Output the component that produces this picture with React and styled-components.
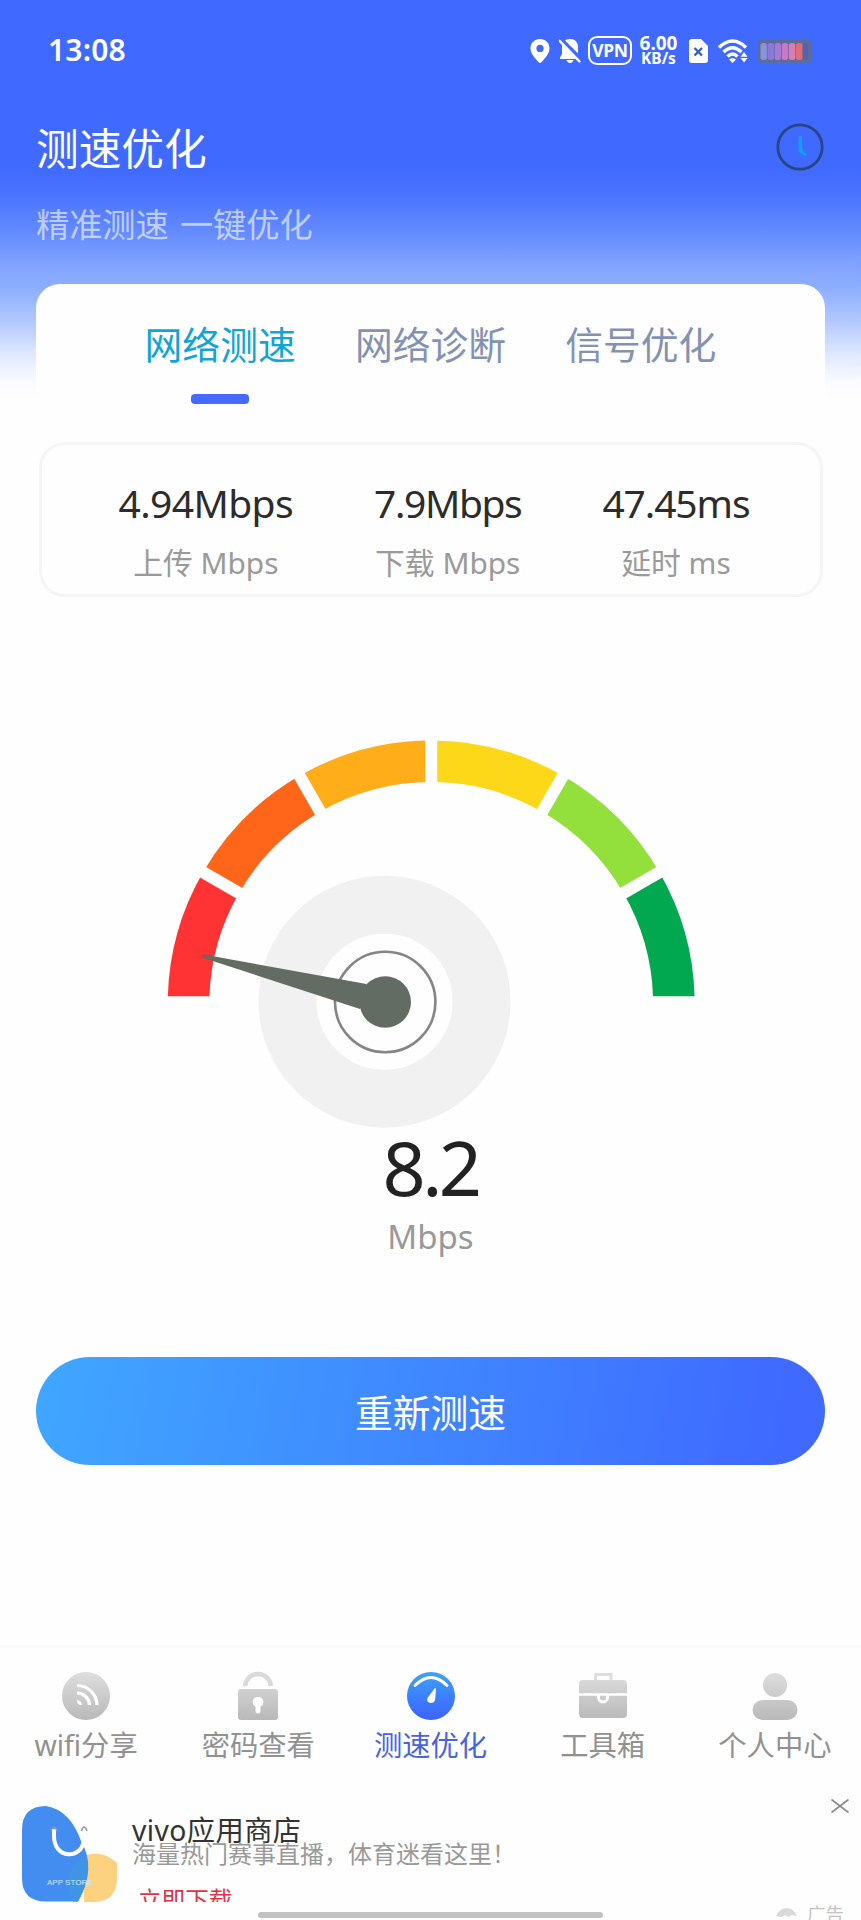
import React from 'react'
import styled, { createGlobalStyle } from 'styled-components'

const GlobalStyle = createGlobalStyle`
  * {
    box-sizing: border-box;
  }
  body {
    margin: 0;
    background: #fefefe;
    font-family: 'Noto Sans', 'Noto Sans CJK SC', sans-serif;
  }
`

const Screen = styled.div`
  display: flex;
  flex-direction: column;
  width: 861px;
  height: 1920px;
  overflow: hidden;
  white-space: nowrap;
  background: linear-gradient(
    #3f69ff 0,
    #3f69ff 165px,
    #4b74ff 195px,
    #6289ff 230px,
    #7ea1ff 262px,
    #8fafff 290px,
    #b7cbff 325px,
    #e0e9ff 355px,
    #fafbff 382px,
    #fefefe 400px
  );
`

const StatusBar = styled.div`
  display: flex;
  align-items: center;
  height: 101px;
  padding: 0 48px;
  color: #fff;
`

const Time = styled.div`
  flex: 1;
  margin-top: -2px;
  font-size: 30px;
  font-weight: 600;
  letter-spacing: 0.2px;
`

const StatusIcon = styled.svg`
  display: block;
  flex: none;
  width: ${p => p.$w}px;
  height: ${p => p.$h || 24}px;
  margin-right: ${p => p.$gap || 0}px;
`

const Vpn = styled.div`
  width: 44px;
  height: 29px;
  margin-right: 5px;
  border: 2.5px solid #fff;
  border-radius: 9px;
  font: 700 17.5px/25px 'Noto Sans', sans-serif;
  letter-spacing: -0.3px;
  text-align: center;
`

const Speed = styled.div`
  width: 43px;
  margin-right: 9px;
  font-size: 19px;
  font-weight: 700;
  line-height: 15px;
  text-align: center;
  & span {
    display: block;
    font-size: 15.5px;
    line-height: 14px;
  }
`

const Header = styled.header`
  display: flex;
  justify-content: space-between;
  height: 183px;
  padding: 20px 37px 0 36px;
  & > svg {
    margin-top: 2px;
  }
`

const Title = styled.h1`
  margin: 0;
  color: #fff;
  font-size: 42.7px;
  font-weight: 400;
  line-height: 56px;
`

const Subtitle = styled.p`
  margin: 26px 0 0;
  color: rgba(255, 255, 255, 0.6);
  font-size: 33.2px;
  line-height: 44px;
  word-spacing: 2.5px;
`

const Card = styled.main`
  display: flex;
  flex-direction: column;
  align-items: center;
  height: 1361px;
  margin: 0 36px;
  border-radius: 24px 24px 0 0;
  background: #fefefe;
`

const Tabs = styled.div`
  display: flex;
  width: 631px;
  height: 158px;
`

const Tab = styled.div`
  display: flex;
  flex: 1;
  flex-direction: column;
  align-items: center;
  padding-top: 36px;
  color: ${p => (p.$active ? '#10a5d6' : '#8492b2')};
  font-size: 37.8px;
  line-height: 50px;
  &::after {
    content: '';
    width: 58px;
    height: 10px;
    margin-top: 24px;
    border-radius: 4px;
    background: ${p => (p.$active ? '#446aff' : 'transparent')};
  }
`

const Stats = styled.div`
  display: flex;
  justify-content: center;
  gap: 81px;
  width: 784px;
  height: 155px;
  padding: 30px 0 0 7px;
  border: 3px solid #f5f5f5;
  border-radius: 26px;
`

const Stat = styled.div`
  text-align: center;
`

const StatValue = styled.div`
  color: #2c2c2c;
  font-size: 39px;
  line-height: 56px;
  letter-spacing: ${p => p.$tracking}px;
`

const StatLabel = styled.div`
  color: #9a9a9a;
  font-size: 29.8px;
  line-height: 40px;
  margin-top: 12px;
`

const Gauge = styled.svg`
  display: block;
  flex: none;
  width: 560px;
  height: 420px;
  margin-top: 123px;
`

const Reading = styled.div`
  height: 98px;
  margin-top: -22px;
  color: #222;
  font-size: 75.5px;
  line-height: 98px;
  letter-spacing: -3.6px;
`

const Unit = styled.div`
  margin-top: -1px;
  color: #999;
  font-size: 33px;
  line-height: 44px;
`

const Button = styled.button`
  width: 789px;
  height: 108px;
  margin-top: 98px;
  padding: 0 0 2px;
  border: 0;
  border-radius: 54px;
  background: linear-gradient(100deg, #40a7ff, #3f69ff 95%);
  color: #fff;
  font: inherit;
  font-size: 37.8px;
`

const NavBar = styled.nav`
  display: flex;
  height: 135px;
  padding-top: 22px;
  border-top: 3px solid #fafafa;
`

const NavItem = styled.div`
  display: flex;
  flex: 1;
  flex-direction: column;
  align-items: center;
  color: ${p => (p.$active ? '#4764dc' : '#919191')};
  font-size: 28.3px;
  line-height: 40px;
  & svg {
    width: 52px;
    height: 52px;
    margin-bottom: 3px;
  }
`

const Ad = styled.section`
  display: flex;
  height: 122px;
  padding: 26px 12px 0 22px;
`

const AdLogo = styled.svg`
  flex: none;
  width: 96px;
  height: 96px;
`

const AdText = styled.div`
  flex: 1;
  height: 96px;
  padding-left: 14px;
  overflow: hidden;
`

const AdTitle = styled.div`
  color: #333;
  font-size: 28.3px;
  line-height: 32px;
  letter-spacing: 0.4px;
  margin-top: 8px;
`

const AdDetail = styled.div`
  color: #999;
  font-size: 24px;
  line-height: 24px;
  margin-top: -4px;
`

const AdAction = styled.div`
  margin: 21px 0 0 6px;
  color: #dc3444;
  font-size: 23.6px;
  line-height: 26px;
`

const CloseIcon = styled.svg`
  width: 18px;
  height: 14px;
  margin-top: -7px;
`

const Footer = styled.footer`
  display: grid;
  grid-template-columns: 1fr 345px 1fr;
  height: 18px;
`

const HomeBar = styled.div`
  grid-column: 2;
  height: 6px;
  margin-top: 10px;
  border-radius: 3px;
  background: #c1c1c1;
`

const AdMark = styled.div`
  display: flex;
  height: 18px;
  padding-left: 173px;
  overflow: hidden;
  color: #c4c4c4;
  font-size: 18.5px;
  line-height: 24px;
  & svg {
    flex: none;
    width: 21px;
    height: 20px;
    margin: 6px 10px 0 0;
  }
`

const segments = [
  { color: '#ff3333', from: 180, to: 150 },
  { color: '#ff6619', from: 150, to: 120 },
  { color: '#ffae1a', from: 120, to: 90 },
  { color: '#fdd819', from: 90, to: 60 },
  { color: '#93e03c', from: 60, to: 30 },
  { color: '#02a84f', from: 30, to: 0 },
]

const stats = [
  { value: '4.94Mbps', label: '上传 Mbps', tracking: -0.6 },
  { value: '7.9Mbps', label: '下载 Mbps', tracking: -1.4 },
  { value: '47.45ms', label: '延时 ms', tracking: -1.1 },
]

const CX = 280.7
const CY = 284

const point = (r, deg) => {
  const a = (deg * Math.PI) / 180
  return `${CX + r * Math.cos(a)} ${CY - r * Math.sin(a)}`
}

const SpeedGauge = () => (
  <Gauge viewBox="0.5 0 560 420">
    <clipPath id="dial">
      <rect width="560" height="276.3" />
    </clipPath>
    <g clipPath="url(#dial)">
      {segments.map(s => (
        <path
          key={s.color}
          d={`M${point(242.7, s.from)}A242.7 242.7 0 0 1 ${point(242.7, s.to)}`}
          fill="none"
          stroke={s.color}
          strokeWidth="41.6"
        />
      ))}
      {[150, 120, 90, 60, 30].map(deg => (
        <path
          key={deg}
          d={`M${point(210, deg)}L${point(275, deg)}`}
          stroke="#fefefe"
          strokeWidth="12"
        />
      ))}
    </g>
    <circle cx="234" cy="281.7" r="97" fill="none" stroke="#f1f1f1" strokeWidth="58" />
    <circle cx="234.7" cy="282" r="50.2" fill="none" stroke="#858585" strokeWidth="2.6" />
    <path d="M53 234.6Q51 236 53 238L209.5 289L216 264Z" fill="#626c62" />
    <circle cx="234.7" cy="282" r="25.8" fill="#626c62" />
  </Gauge>
)

const App = () => (
  <Screen>
    <GlobalStyle />
    <StatusBar>
      <Time>13:08</Time>
      <StatusIcon viewBox="0 0 20 24" $w={20} $gap={9}>
        <path
          fillRule="evenodd"
          fill="#fff"
          d="M10 0C4.500 0 .5 4 .5 9.300C.5 15 5 19 8.600 23.300Q10 24.500 11.400 23.300C15 19 19.500 15 19.500 9.300C19.500 4 15.500 0 10 0ZM10 5.800A3.600 3.600 0 1 1 10 13A3.600 3.600 0 0 1 10 5.800Z"
        />
      </StatusIcon>
      <StatusIcon viewBox="0 0 22 24" $w={22} $gap={7}>
        <path
          fill="#fff"
          d="M11 0C6 0 3 3.500 3 8V15L1 18.500V20H21V18.500L19 15V8C19 3.500 16 0 11 0ZM7.500 21H14.500Q13.500 24 11 24Q8.500 24 7.500 21Z"
        />
        <path d="M2 0L22.500 20.500" stroke="#3f69ff" strokeWidth="3.500" />
        <path d="M.5 1.800L20.500 22.500" stroke="#fff" strokeWidth="2.400" strokeLinecap="round" />
      </StatusIcon>
      <Vpn>VPN</Vpn>
      <Speed>
        6.00<span>KB/s</span>
      </Speed>
      <StatusIcon viewBox="0 0 19 24" $w={19} $gap={10}>
        <path fill="#fff" d="M3 0H12L19 7V21Q19 24 16 24H3Q0 24 0 21V3Q0 0 3 0Z" />
        <path d="M5.500 9L13 16.500M13 9L5.500 16.500" stroke="#3a5ab8" strokeWidth="2.300" />
      </StatusIcon>
      <StatusIcon viewBox="0 0 30 24" $w={30} $gap={9}>
        <g fill="none" stroke="#fff" strokeWidth="3.400">
          <path d="M1 8.500Q14.500 -4.500 28 8.500" />
          <path d="M5.500 13Q14.500 4.500 23.500 13" />
          <path d="M9.500 17.500Q14.500 12.500 19.500 17.500" />
        </g>
        <path d="M11 20.500Q14.500 18 18 20.500L14.500 24Z" fill="#fff" />
        <path d="M22.500 17.800L26 13L29.500 17.800ZM22.500 19H29.500L26 23.500Z" fill="#fff" />
      </StatusIcon>
      <StatusIcon viewBox="0 0 56 24" $w={56}>
        <rect y="1" width="55" height="23" rx="5" fill="#5d6c9b" />
        <rect x="46" y="4" width="5" height="17" rx="2" fill="#5462b4" />
        {['#8894d6', '#8b79d8', '#a678d7', '#cb78c3', '#d67eb0', '#e36b74'].map((c, i) => (
          <rect key={c} x={3.5 + i * 7.1} y="4" width="6.400" height="17" rx="2.500" fill={c} />
        ))}
      </StatusIcon>
    </StatusBar>

    <Header>
      <div>
        <Title>测速优化</Title>
        <Subtitle>精准测速 一键优化</Subtitle>
      </div>
      <StatusIcon viewBox="0 0 48 48" $w={48} $h={48}>
        <circle cx="24" cy="24" r="22.200" fill="none" stroke="#2a4584" strokeWidth="2.800" />
        <path d="M22.500 13H26V24.500Q27 28.500 31.500 31.500L29 33Q25.500 31.500 22.500 28.500Z" fill="#139cf2" />
      </StatusIcon>
    </Header>

    <Card>
      <Tabs>
        <Tab $active>网络测速</Tab>
        <Tab>网络诊断</Tab>
        <Tab>信号优化</Tab>
      </Tabs>
      <Stats>
        {stats.map(s => (
          <Stat key={s.value}>
            <StatValue $tracking={s.tracking}>{s.value}</StatValue>
            <StatLabel>{s.label}</StatLabel>
          </Stat>
        ))}
      </Stats>
      <SpeedGauge />
      <Reading>8.2</Reading>
      <Unit>Mbps</Unit>
      <Button>重新测速</Button>
    </Card>

    <NavBar>
      <NavItem>
        <svg viewBox="0 0 52 52">
          <linearGradient id="gray" x1="0" y1="2" x2="0" y2="50" gradientUnits="userSpaceOnUse">
            <stop stopColor="#dedede" />
            <stop offset="1" stopColor="#b9b9b9" />
          </linearGradient>
          <circle cx="26" cy="26" r="24" fill="url(#gray)" />
          <g fill="none" stroke="#fff" strokeWidth="3.200">
            <path d="M17 15.500A20 20 0 0 1 37 35" />
            <path d="M17 23A12.500 12.500 0 0 1 29.500 35" />
          </g>
          <path d="M17 30Q21.500 30.500 22 35H19.500L17 32.500Z" fill="#fff" />
        </svg>
        wifi分享
      </NavItem>
      <NavItem>
        <svg viewBox="0 0 52 52">
          <path d="M13 16C15 0 37 0 39 16" fill="none" stroke="#dadada" strokeWidth="4.500" />
          <rect x="6" y="19" width="40" height="31" rx="3" fill="url(#gray)" />
          <path d="M26 27A5 5 0 0 1 28.500 36.500V41A2.500 2.500 0 0 1 23.500 41V36.500A5 5 0 0 1 26 27Z" fill="#fff" />
        </svg>
        密码查看
      </NavItem>
      <NavItem $active>
        <svg viewBox="0 0 52 52">
          <linearGradient id="blue" x1="0" y1="2" x2="0" y2="50" gradientUnits="userSpaceOnUse">
            <stop stopColor="#40a5ee" />
            <stop offset=".5" stopColor="#3b80ff" />
            <stop offset="1" stopColor="#3f62fa" />
          </linearGradient>
          <circle cx="26" cy="26" r="24" fill="url(#blue)" />
          <path d="M10 15.500Q26 -.5 42 15.500" fill="none" stroke="#fff" strokeWidth="3" strokeLinecap="round" />
          <path d="M29.500 18.500Q31 17.500 31 19.500L30 30.500Q28.500 33.500 25 33Q21 31.500 22.500 28Z" fill="#fff" />
        </svg>
        测速优化
      </NavItem>
      <NavItem>
        <svg viewBox="0 0 52 52">
          <path d="M18.500 10V4.500H34V10" fill="none" stroke="#dedede" strokeWidth="3" />
          <rect x="2" y="10" width="48" height="38" rx="4" fill="url(#gray)" />
          <path d="M2 24.500H50" stroke="#fff" strokeWidth="2.600" />
          <path d="M21.500 24.500V27.500A4.500 4.500 0 0 0 30.500 27.500V24.500" fill="none" stroke="#fff" strokeWidth="3" />
        </svg>
        工具箱
      </NavItem>
      <NavItem>
        <svg viewBox="0 0 52 52">
          <circle cx="26" cy="15" r="12" fill="url(#gray)" />
          <rect x="3.500" y="30" width="45" height="20" rx="10" fill="url(#gray)" />
        </svg>
        个人中心
      </NavItem>
    </NavBar>

    <Ad>
      <AdLogo viewBox="0 0 96 96">
        <path d="M62 96V50Q80 43 95 57V72Q95 96 71 96Z" fill="#fcd280" />
        <path d="M0 24Q0 0 24 0Q48 4 59 35Q75 62 56 95.500H24Q0 95.500 0 72Z" fill="#438cf0" />
        <path d="M65 52Q46 56 46 78Q46 88 51 95.500H56Q68 75 65 52Z" fill="#3f95e4" />
        <path d="M32 23V30C32 54 60 53 61.500 35" fill="none" stroke="#fff" strokeWidth="4" />
        <path d="M29 25Q32 17 35 25M59.500 25Q62 17 65 25" fill="none" stroke="#8f9aa8" strokeWidth="1.600" />
        <text x="25" y="79" fill="#d8e8ff" fontSize="8" fontFamily="Liberation Sans, sans-serif">
          APP STORE
        </text>
      </AdLogo>
      <AdText>
        <AdTitle>vivo应用商店</AdTitle>
        <AdDetail>海量热门赛事直播，体育迷看这里！</AdDetail>
        <AdAction>立即下载</AdAction>
      </AdText>
      <CloseIcon viewBox="0 0 18 14">
        <path d="M.5 .5L17.500 13.500M17.500 .5L.5 13.500" stroke="#8c8c8c" strokeWidth="1.800" />
      </CloseIcon>
    </Ad>
    <Footer>
      <HomeBar />
      <AdMark>
        <svg viewBox="0 0 21 20">
          <path d="M0 8Q4 0 10.500 0Q17 0 21 8L16 7L12 9L9 7L5 9Z" fill="#d9d9d9" />
        </svg>
        广告
      </AdMark>
    </Footer>
  </Screen>
)

export default App
